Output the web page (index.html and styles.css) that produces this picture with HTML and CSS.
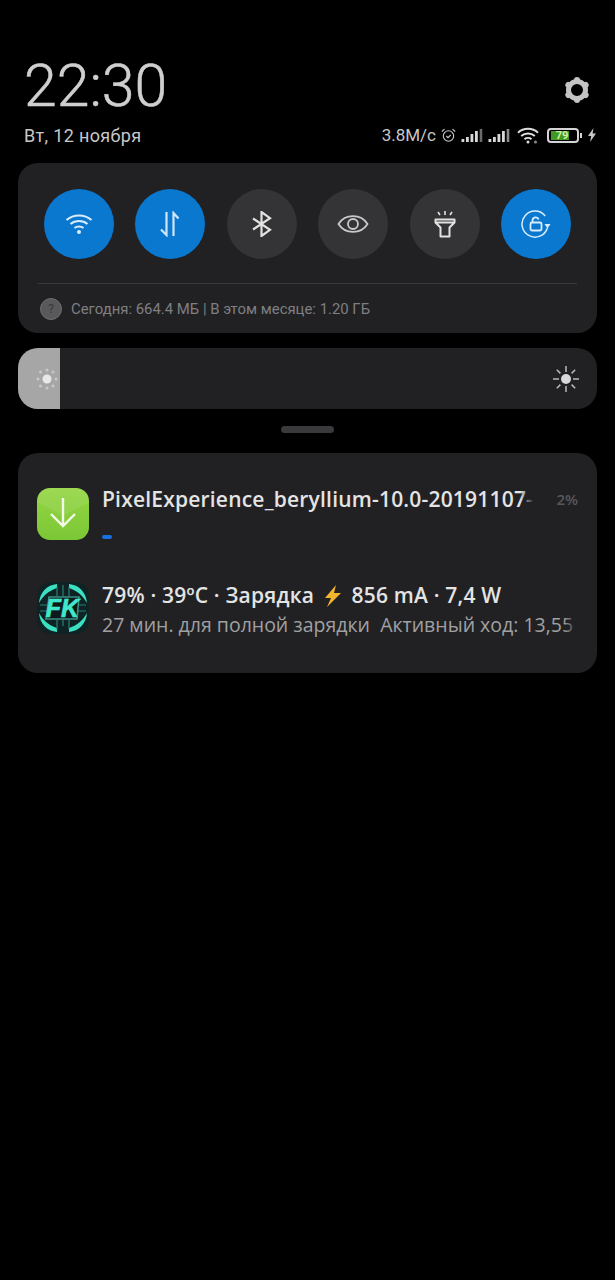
FILE: index.html
```html
<!doctype html>
<html>
<head>
<meta charset="utf-8">
<meta name="viewport" content="width=device-width,initial-scale=1">
<title>Шторка</title>
<link rel="stylesheet" href="styles.css">
</head>
<body>
<div class="header">
  <div class="clock-row">
    <div class="clock">22:30</div>
    <svg class="gear" viewBox="0 0 26 26">
      <circle cx="13" cy="13" r="8.500" fill="none" stroke="#c4c4c4" stroke-width="5"/>
      <g stroke="#c4c4c4" stroke-width="6" stroke-linecap="round">
        <path d="M13 3.500V3"/>
        <path d="M13 3.500V3" transform="rotate(60 13 13)"/>
        <path d="M13 3.500V3" transform="rotate(120 13 13)"/>
        <path d="M13 3.500V3" transform="rotate(180 13 13)"/>
        <path d="M13 3.500V3" transform="rotate(240 13 13)"/>
        <path d="M13 3.500V3" transform="rotate(300 13 13)"/>
      </g>
    </svg>
  </div>
  <div class="status-row">
    <span class="date">Вт, 12 ноября</span>
    <div class="status-icons">
      <span class="speed">3.8M/c</span>
      <svg class="ic-alarm" viewBox="0 0 15 15" fill="none" stroke="#c8c8c8" stroke-width="1.100"><circle cx="7.500" cy="8" r="5.200"/><path d="M5.300 8l1.700 1.700 2.700-2.700M.8 3.500L3.500 1.100M14.200 3.500L11.500 1.100"/></svg>
      <svg class="ic-signal" viewBox="0 0 22 15"><path d="M.5 11h2.800v3H.5zM5 9h2.800v5H5zM9.500 6h2.800v8H9.500zM14 3h2.800v11H14z" fill="#d8d8d8"/><path d="M18.700 1h2.600v13h-2.600z" fill="#6a6a6a"/></svg>
      <svg class="ic-signal" viewBox="0 0 22 15"><path d="M.5 11h2.800v3H.5zM5 9h2.800v5H5zM9.500 6h2.800v8H9.500zM14 3h2.800v11H14z" fill="#d8d8d8"/><path d="M18.700 1h2.600v13h-2.600z" fill="#8a8a8a"/></svg>
      <svg class="ic-wifi" viewBox="0 0 22 17" fill="none" stroke="#dcdcdc" stroke-width="2"><path d="M1 5.700c5.600-5.200 14.400-5.200 20 0M4.200 9c3.800-3.300 9.800-3.300 13.600 0M7.500 12.200c1.900-1.600 5.100-1.600 7 0"/><circle cx="11" cy="15" r="1.500" fill="#dcdcdc" stroke="none"/><circle cx="18.500" cy="15" r="1.500" fill="#8a8a8a" stroke="none"/></svg>
      <div class="battery">
        <div class="battery-body"><div class="battery-fill"></div><span class="battery-num">79</span></div>
        <div class="battery-tip"></div>
      </div>
      <svg class="ic-bolt" viewBox="0 0 10 14"><path d="M6.500 0L1 8h3.200L3 14l6-8.500H5.600z" fill="#c8c8c8"/></svg>
    </div>
  </div>
</div>

<div class="card toggles">
  <div class="toggle-row">
    <div class="toggle on">
      <svg width="28" height="22" viewBox="0 0 28 22" fill="none" stroke="#d9ecfb" stroke-width="2"><path d="M1.500 7c7-6 18-6 25 0M5.500 11c4.800-4 12.200-4 17 0M9.500 15c2.500-2 6.500-2 9 0"/><circle cx="14" cy="19" r="2" fill="#d9ecfb" stroke="none"/></svg>
    </div>
    <div class="toggle on">
      <svg width="22" height="26" viewBox="0 0 22 26" fill="none" stroke="#cfe6f9" stroke-width="2.200"><path d="M7.500 1v23L2 18.500M14.500 25V2l5 5.500"/></svg>
    </div>
    <div class="toggle">
      <svg width="22" height="26" viewBox="0 0 22 26" fill="none" stroke="#e2e2e2" stroke-width="2.200"><path d="M2 7.500l17 11.300L10.500 25V1L19 7.200 2 18.500"/></svg>
    </div>
    <div class="toggle">
      <svg width="32" height="22" viewBox="0 0 32 22" fill="none" stroke="#c9c9c9" stroke-width="1.800"><path d="M1.500 11C8 .5 24 .5 30.500 11 24 21.500 8 21.500 1.500 11z"/><circle cx="16" cy="11" r="5"/></svg>
    </div>
    <div class="toggle">
      <svg width="24" height="28" viewBox="0 0 24 28" fill="none" stroke="#e2e2e2" stroke-width="2"><path d="M2.500 9.500h19v3l-5 5v9h-9v-9l-5-5zM2.500 12.500h19" stroke-linejoin="round"/><path d="M12 1v4M5 2l2 3M19 2l-2 3" stroke-width="1.600"/></svg>
    </div>
    <div class="toggle on">
      <svg width="30" height="28" viewBox="0 0 30 28" fill="none" stroke="#d9ecfb" stroke-width="1.500"><path d="M26.400 18A13 13 0 1 1 24.200 6"/><path d="M23.500 14h6l-3 4.500z" fill="#d9ecfb" stroke="none"/><rect x="9.500" y="12.500" width="11" height="8" rx="1.500" stroke-width="1.800"/><path d="M11.500 12.500v-2a3.200 3.200 0 0 1 6.200-1" stroke-width="1.800"/></svg>
    </div>
  </div>
  <div class="usage">
    <span class="usage-help">?</span>
    <span>Сегодня: 664.4 МБ | В этом месяце: 1.20 ГБ</span>
  </div>
</div>

<div class="card brightness">
  <div class="brightness-fill">
    <svg width="24" height="24" viewBox="0 0 24 24"><circle cx="12" cy="12" r="4.500" fill="#e8e8e8"/><g fill="#c8c8c8"><circle cx="12" cy="3" r="1.500"/><circle cx="12" cy="21" r="1.500"/><circle cx="3" cy="12" r="1.500"/><circle cx="21" cy="12" r="1.500"/><circle cx="5.500" cy="5" r="1.500"/><circle cx="18" cy="5" r="1.500"/><circle cx="5.500" cy="19" r="1.500"/><circle cx="18" cy="19" r="1.500"/></g></svg>
  </div>
  <svg class="sun" width="30" height="30" viewBox="0 0 30 30" fill="none" stroke="#b8b8b8" stroke-width="1.500"><circle cx="15" cy="15" r="5" fill="#d8d8d8" stroke="none"/><path d="M15 2v6M15 22v6M2 15h6M22 15h6M5.800 5.800l3.600 3.600M20.600 20.600l3.600 3.600M5.800 24.200l3.600-3.600M20.600 9.400l3.600-3.600"/></svg>
</div>

<div class="handle"></div>

<div class="card notes">
  <div class="note note-download">
    <div class="app-icon icon-download">
      <svg width="52" height="52" viewBox="0 0 52 52"><path d="M0 14l26 14 26-14V0H0z" fill="#fff" opacity=".08"/><path d="M26 10v28M14 26l12 12 12-12" fill="none" stroke="#f3f9ea" stroke-width="2.400"/></svg>
    </div>
    <div class="note-body">
      <div class="note-line">
        <div class="note-title clip">PixelExperience_beryllium-10.0-20191107-<span class="fade"></span></div>
        <span class="percent">2%</span>
      </div>
      <div class="progress"></div>
    </div>
  </div>
  <div class="note note-kernel">
    <div class="app-icon icon-fk">
      <svg width="52" height="52" viewBox="0 0 52 52">
        <rect width="52" height="52" rx="13" fill="#0f2324"/>
        <path d="M20 2C10 3 3 10 2 21c4-7 9-12 18-15zM32 2c10 1 17 8 18 19-4-7-9-12-18-15zM20 50C10 49 3 42 2 31c4 7 9 12 18 15zM32 50c10-1 17-8 18-19-4 7-9 12-18 15z" fill="#3be0c3"/>
        <path d="M20 5v9M26 3v11M32 5v9M20 38v9M26 38v6M32 38v9M3 23h8M3 29h8M41 23h8M41 29h8" stroke="#2a7f73" stroke-width="1.200" fill="none"/>
        <path d="M12 15h30l-2 22H9z" fill="#0c1a1c" stroke="#3a8f82" stroke-width="1.600"/>
        <text x="25.500" y="34.500" class="fk-text">FK</text>
      </svg>
    </div>
    <div class="note-body">
      <div class="note-title">79% · 39ºC · Зарядка <svg class="bolt" width="20" height="22" viewBox="0 0 20 22"><path d="M13 0L2 13h6l-4 9L18 8h-7z" fill="#f4b52e"/></svg> 856 mA · 7,4 W</div>
      <div class="note-sub clip">27 мин. для полной зарядки&nbsp; Активный ход: 13,55<span class="fade"></span></div>
    </div>
  </div>
</div>
</body>
</html>
```

FILE: styles.css
```css
html, body {
  margin: 0;
  height: 100%;
}
body {
  width: 615px;
  height: 1280px;
  overflow: hidden;
  background: #000;
  color: #e6e6e6;
  font-family: "Open Sans", "Noto Sans", sans-serif;
  padding: 0 18px;
  box-sizing: border-box;
}
.header {
  padding: 52px 6px 0;
  height: 163px;
  box-sizing: border-box;
}
.clock-row {
  display: flex;
  justify-content: space-between;
  align-items: flex-end;
  height: 68px;
}
.clock {
  font-family: Roboto, sans-serif;
  font-weight: 300;
  font-size: 59px;
  line-height: 68px;
  color: #cfcfcf;
  -webkit-text-stroke: .5px #cfcfcf;
}
.gear {
  width: 26px;
  height: 26px;
  margin: 0 1px 17px 0;
}
.status-row {
  display: flex;
  justify-content: space-between;
  align-items: center;
  margin-top: 3px;
  height: 24px;
  margin-right: -6px;
}
.date {
  font-family: Roboto, sans-serif;
  font-size: 18px;
  letter-spacing: .35px;
  color: #c8c8c8;
}
.status-icons {
  display: flex;
  align-items: center;
  gap: 5px;
}
.speed {
  font-family: Roboto, sans-serif;
  font-size: 17px;
  color: #c8c8c8;
}
.ic-alarm { width: 15px; height: 15px; }
.ic-signal { width: 22px; height: 15px; }
.ic-wifi { width: 22px; height: 17px; margin-left: 2px; }
.battery {
  display: flex;
  align-items: center;
  gap: 1px;
  margin-left: 3px;
}
.battery-body {
  position: relative;
  width: 24px;
  height: 9px;
  border: 2px solid #d4d4d4;
  border-radius: 4px;
  padding: 1px 2px;
}
.battery-fill {
  width: 76%;
  height: 100%;
  background: #3f9a22;
}
.battery-num {
  position: absolute;
  left: 0;
  right: 2px;
  top: -1px;
  text-align: center;
  font-family: Roboto, sans-serif;
  font-size: 11px;
  line-height: 13px;
  font-weight: 700;
  color: #d8efa8;
}
.battery-tip {
  width: 2px;
  height: 5px;
  background: #d4d4d4;
}
.ic-bolt { width: 10px; height: 14px; }

.card {
  background: #212124;
  border-radius: 20px;
}
.toggles {
  height: 170px;
  padding: 26px 20px 0;
  box-sizing: border-box;
}
.toggle-row {
  display: flex;
  justify-content: space-between;
  padding: 0 6px;
  height: 94px;
  border-bottom: 1px solid #3a3a3d;
}
.toggle {
  width: 70px;
  height: 70px;
  border-radius: 50%;
  background: #343436;
  display: flex;
  align-items: center;
  justify-content: center;
}
.toggle.on {
  background: #0b78d0;
}
.usage {
  display: flex;
  align-items: center;
  gap: 9px;
  height: 49px;
  padding-left: 2px;
  font-family: Roboto, sans-serif;
  font-size: 14.900px;
  color: #7f7f81;
}
.usage-help {
  width: 20px;
  height: 20px;
  border: 1px solid #6e6e70;
  border-radius: 50%;
  background: #59595b;
  color: #38383a;
  font-size: 12px;
  line-height: 20px;
  text-align: center;
}
.brightness {
  display: flex;
  justify-content: space-between;
  align-items: center;
  height: 61px;
  margin-top: 15px;
  padding-right: 16px;
  overflow: hidden;
}
.brightness-fill {
  width: 42px;
  height: 100%;
  background: #a6a6a6;
  display: flex;
  align-items: center;
  justify-content: center;
  padding-left: 16px;
  box-sizing: border-box;
}
.handle {
  width: 53px;
  height: 7px;
  margin: 17px auto 20px;
  border-radius: 4px;
  background: #3a3a3c;
}
.notes {
  height: 220px;
  padding: 35px 19px 0;
  box-sizing: border-box;
}
.note {
  display: flex;
  gap: 13px;
}
.note-download {
  height: 94px;
}
.app-icon {
  width: 52px;
  height: 52px;
  flex: none;
  border-radius: 13px;
  overflow: hidden;
}
.icon-download {
  background: linear-gradient(#96d644, #7cc736);
}
.fk-text {
  font-family: "Liberation Sans", sans-serif;
  font-size: 25px;
  font-weight: 700;
  font-style: italic;
  fill: #3fe8cb;
  stroke: #3fe8cb;
  stroke-width: .6px;
  text-anchor: middle;
}
.note-body {
  min-width: 0;
  flex: 1;
}
.note-line {
  display: flex;
  justify-content: space-between;
  align-items: flex-start;
  margin-top: -2px;
}
.note-title {
  font-size: 21px;
  line-height: 26px;
  font-weight: 600;
  letter-spacing: .2px;
  color: #e4e4e4;
  white-space: nowrap;
}
.note-sub {
  font-size: 19.500px;
  line-height: 30px;
  margin-top: 2px;
  color: #a0a0a2;
  white-space: nowrap;
}
.clip {
  position: relative;
  overflow: hidden;
}
.note-line .note-title {
  width: 432px;
}
.fade {
  position: absolute;
  right: 0;
  top: 0;
  width: 14px;
  height: 100%;
  background: linear-gradient(to right, rgba(33,33,36,0), #212124);
}
.percent {
  font-size: 15px;
  line-height: 26px;
  font-weight: 600;
  color: #58585a;
}
.progress {
  width: 10px;
  height: 4px;
  margin-top: 23px;
  border-radius: 2px;
  background: #1a70e0;
}
.bolt {
  vertical-align: -4px;
  margin: 0 3px 0 3px;
}
```
